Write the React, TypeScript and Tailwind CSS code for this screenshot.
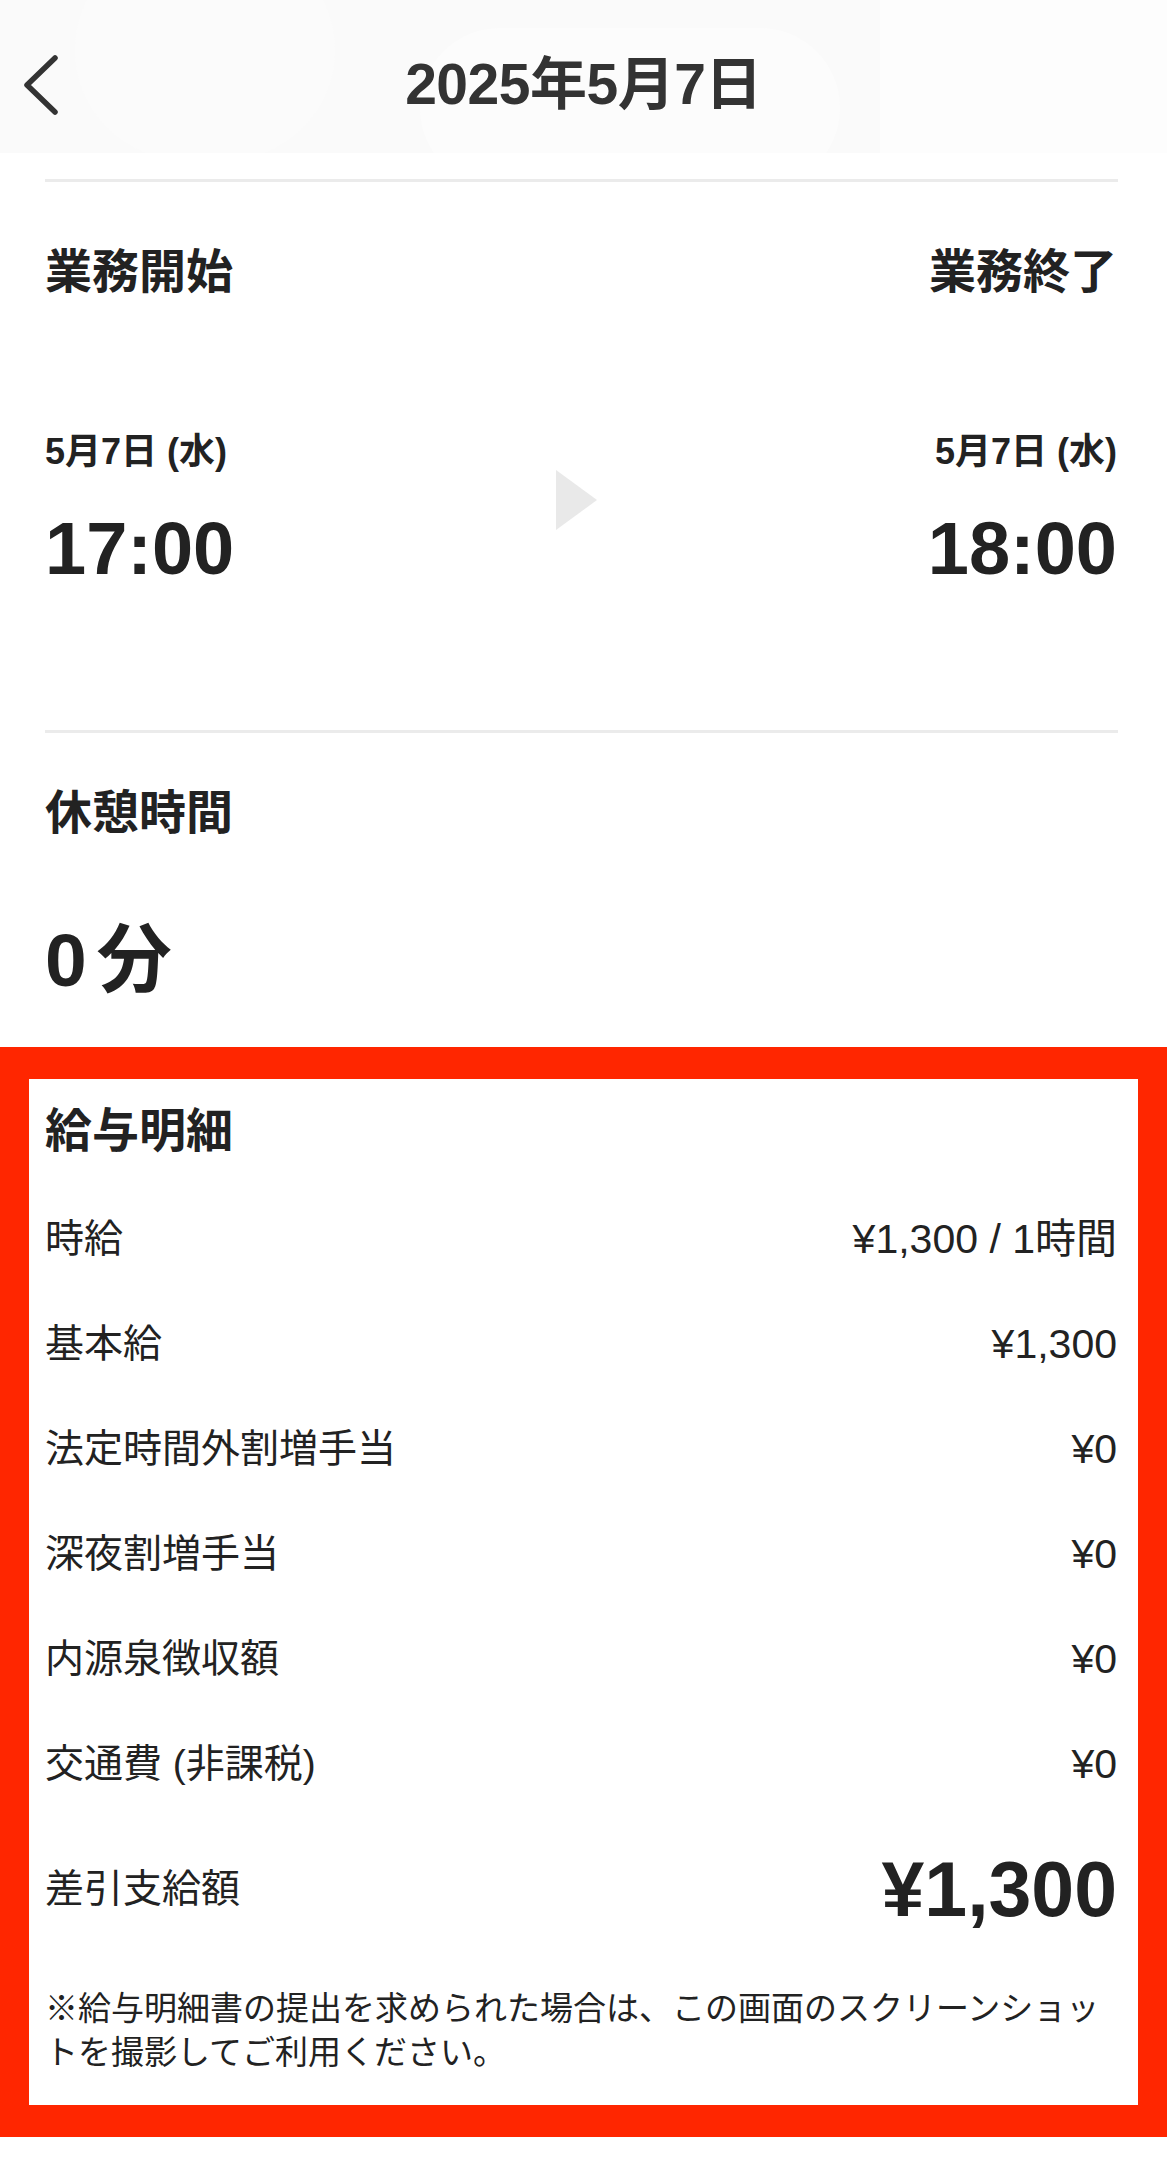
const FONT = "font-['Liberation_Sans','Noto_Sans_CJK_JP',sans-serif]";

type PayRow = {
  label: string;
  value: string;
};

const PAY_ROWS: PayRow[] = [
  { label: "時給", value: "¥1,300 / 1時間" },
  { label: "基本給", value: "¥1,300" },
  { label: "法定時間外割増手当", value: "¥0" },
  { label: "深夜割増手当", value: "¥0" },
  { label: "内源泉徴収額", value: "¥0" },
  { label: "交通費 (非課税)", value: "¥0" },
];

const BackIcon = () => (
  <svg width="40" height="64" viewBox="0 0 40 64" fill="none" aria-hidden="true">
    <path
      d="M35 5 L7 32 L35 59"
      stroke="#333333"
      strokeWidth="5.5"
      strokeLinecap="round"
      strokeLinejoin="round"
    />
  </svg>
);

const Header = () => (
  <header className="relative h-[153px] overflow-hidden bg-[#fafafa]">
    {/* faint map-like blobs behind the nav bar */}
    <div
      aria-hidden="true"
      className="pointer-events-none absolute left-[75px] top-[-60px] h-[220px] w-[260px] rounded-full bg-[#fbfbfb]"
    />
    <div
      aria-hidden="true"
      className="pointer-events-none absolute left-[420px] top-[28px] h-[160px] w-[420px] rounded-[80px] bg-[#fcfcfc]"
    />
    <div
      aria-hidden="true"
      className="pointer-events-none absolute left-[880px] top-0 h-[153px] w-[287px] bg-[#fdfdfd]"
    />
    <div className="relative grid h-full grid-cols-[1fr_auto_1fr] items-center pt-[16px]">
      <div className="pl-[20px]">
        <BackIcon />
      </div>
      <h1 className="text-[57px] font-semibold leading-none tracking-[-0.5px] text-[#333333]">
        2025年5月7日
      </h1>
      <div />
    </div>
  </header>
);

const Divider = () => <div className="ml-[45px] mr-[49px] h-[3px] bg-[#ebebeb]" />;

const TimeBlock = ({ date, time, align }: { date: string; time: string; align: "left" | "right" }) => (
  <div className={align === "left" ? "flex flex-col items-start" : "flex flex-col items-end"}>
    <p className="text-[36px] font-bold leading-[44px] text-[#222222]">{date}</p>
    <p className="mt-[39px] text-[74px] font-bold leading-[72px] text-[#222222]">{time}</p>
  </div>
);

const WorkTime = () => (
  <section className="pb-[145px] pl-[45px] pr-[50px] pt-[62px]">
    <div className="flex items-center justify-between">
      <h2 className="text-[47px] font-bold leading-[56px] text-[#222222]">業務開始</h2>
      <h2 className="text-[47px] font-bold leading-[56px] text-[#222222]">業務終了</h2>
    </div>
    <div className="mt-[130px] grid grid-cols-[1fr_auto_1fr] items-center">
      <TimeBlock date="5月7日 (水)" time="17:00" align="left" />
      <svg width="42" height="60" viewBox="0 0 42 60" aria-hidden="true" className="mb-[16px] mr-[8px]">
        <path d="M0 0 L41 30 L0 60 Z" fill="#e9e9e9" />
      </svg>
      <TimeBlock date="5月7日 (水)" time="18:00" align="right" />
    </div>
  </section>
);

const BreakTime = () => (
  <section className="pb-[51px] pl-[45px] pr-[50px] pt-[52px]">
    <h2 className="text-[47px] font-bold leading-[56px] text-[#222222]">休憩時間</h2>
    <p className="mt-[83px] flex items-baseline text-[75px] font-bold leading-[72px] text-[#222222]">
      <span>0</span>
      <span className="ml-[10px]">分</span>
    </p>
  </section>
);

const PaySlip = () => (
  <section className="border-x-[29px] border-y-[32px] border-[#ff2600] pb-[30px] pl-[16px] pr-[21px] pt-[24px]">
    <h2 className="text-[47px] font-bold leading-[56px] text-[#222222]">給与明細</h2>
    <div className="mt-[28px]">
      {PAY_ROWS.map((row) => (
        <div key={row.label} className="flex h-[105px] items-center justify-between text-[#222222]">
          <span className="text-[39px]">{row.label}</span>
          <span className="text-[41px]">{row.value}</span>
        </div>
      ))}
    </div>
    <div className="flex h-[144px] items-center justify-between text-[#222222]">
      <span className="text-[39px]">差引支給額</span>
      <span className="text-[77px] font-bold leading-none">¥1,300</span>
    </div>
    <p className="mt-[26px] text-[33px] leading-[44px] text-[#222222]">
      ※給与明細書の提出を求められた場合は、この画面のスクリーンショットを撮影してご利用ください。
    </p>
  </section>
);

export default function App() {
  return (
    <div className={`${FONT} min-h-[2160px] w-[1167px] bg-white`}>
      <Header />
      <div className="mt-[26px]">
        <Divider />
      </div>
      <WorkTime />
      <Divider />
      <BreakTime />
      <PaySlip />
    </div>
  );
}
